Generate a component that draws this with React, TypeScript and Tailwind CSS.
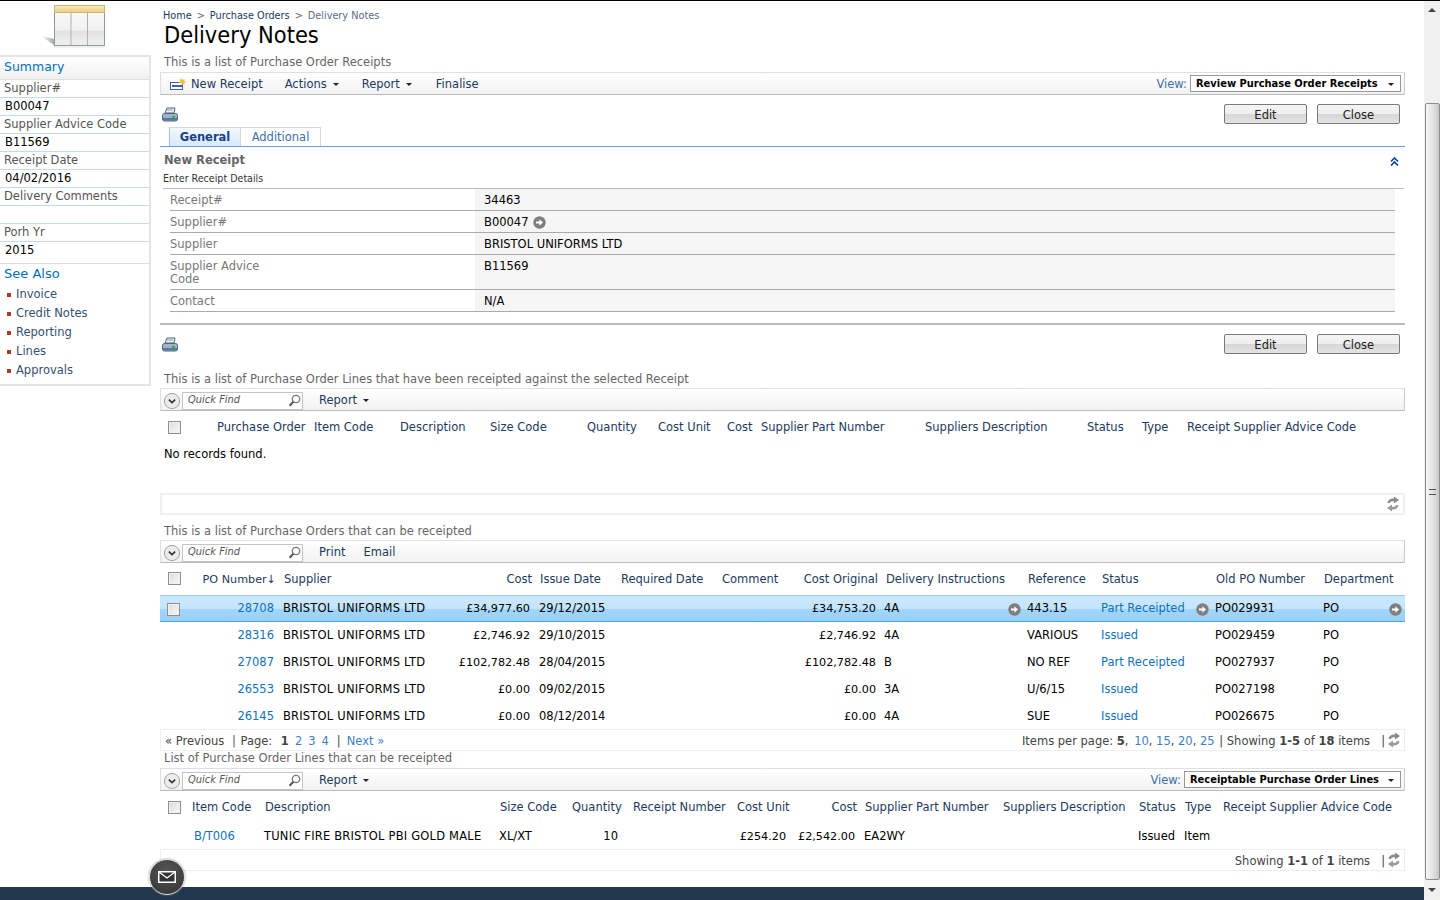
import React from 'react';

const condensed = "font-['DejaVu_Sans_Condensed','DejaVu_Sans',sans-serif] font-stretch-condensed";

const Caret = () => <span className="ml-[6px] inline-block align-middle border-x-[3px] border-t-[3px] border-x-transparent border-t-[#222]" />;

const CircleArrow = () => (
  <svg width="13" height="13" viewBox="0 0 13 13" className="shrink-0">
    <circle cx="6.5" cy="6.5" r="6.2" fill="#7f7f7f" />
    <path d="M3 5.4h3.4V3.2L10 6.5 6.4 9.8V7.6H3z" fill="#fff" />
  </svg>
);

const Printer = () => (
  <svg width="16" height="15" viewBox="0 0 16 15">
    <path d="M5 1h8l-1 5H3z" fill="#eef2f7" stroke="#51657f" />
    <rect x="5" y="2.5" width="6" height="1" fill="#8ba0ba" />
    <rect x="0.5" y="6.5" width="15" height="7.5" rx="2" fill="#9fb2c9" stroke="#4f6582" />
    <rect x="1" y="11" width="14" height="2.5" fill="#5f7899" />
    <rect x="10" y="9" width="3" height="2" fill="#22c02c" />
  </svg>
);

const Refresh = () => (
  <svg width="14" height="16" viewBox="0 0 14 16">
    <path d="M1.5 7C1.8 3.8 4.8 2 8 2.6V0.6l5 3.4-5 3.4V5.3C6 4.9 4.4 5.6 3.8 7z" fill="#8a8a8a" />
    <path d="M12.5 9c-.3 3.2-3.3 5-6.5 4.4v2L1 12l5-3.4v2.1c2 .4 3.6-.3 4.2-1.7z" fill="#9a9a9a" />
  </svg>
);

const Checkbox = () => (
  <span className="block h-[13px] w-[13px] border border-[#8e8f8f] bg-[linear-gradient(135deg,#dcdcdc,#f8f8f8)] shadow-[inset_0_0_0_1px_#f0f0f0]" />
);

const Logo = () => (
  <svg width="80" height="50" viewBox="0 0 80 50">
    <defs>
      <linearGradient id="logoHead" x1="0" y1="0" x2="0" y2="1">
        <stop offset="0" stopColor="#f8ecc0" />
        <stop offset="1" stopColor="#eccc7c" />
      </linearGradient>
      <linearGradient id="logoBody" x1="0" y1="0" x2="0" y2="1">
        <stop offset="0" stopColor="#fafafa" />
        <stop offset="0.6" stopColor="#f2f2f2" />
        <stop offset="0.65" stopColor="#e2e2e2" />
        <stop offset="1" stopColor="#f0f0f0" />
      </linearGradient>
      <linearGradient id="logoShadow" x1="0" y1="0" x2="1" y2="0">
        <stop offset="0" stopColor="#ffffff" />
        <stop offset="1" stopColor="#a8a8a8" />
      </linearGradient>
    </defs>
    <path d="M11 35 L24 38 L24 44z" fill="url(#logoShadow)" />
    <rect x="24.5" y="4.5" width="50" height="40" fill="url(#logoBody)" stroke="#8d9c9a" />
    <rect x="24.5" y="4.5" width="50" height="7" fill="url(#logoHead)" stroke="#c9b67a" />
    <path d="M41 12v32M57.5 12v32" stroke="#a9b4b2" />
    <path d="M24 46h51" stroke="#dde3e2" />
  </svg>
);

const QuickFind = () => (
  <div className="flex items-center">
    <svg width="18" height="18" viewBox="0 0 18 18" className="ml-[2px]">
      <circle cx="9" cy="9" r="7.6" fill="#ececec" stroke="#a5a5a5" />
      <path d="M5.8 7.6 9 10.6l3.2-3" fill="none" stroke="#333" strokeWidth="1.6" />
    </svg>
    <div className="ml-px flex h-[18px] w-[121px] items-center justify-between border border-[#c4c4c4] bg-white pl-[5px] pr-px">
      <span className={`${condensed} italic text-[#555] text-[11px]`}>Quick Find</span>
      <svg width="13" height="13" viewBox="0 0 13 13">
        <circle cx="8" cy="5" r="3.7" fill="#fff" stroke="#777" strokeWidth="1.3" />
        <path d="M5.4 7.8 1.5 11.8" stroke="#555" strokeWidth="2" />
      </svg>
    </div>
  </div>
);

const Toolbar = ({ children, right }: { children: React.ReactNode; right?: React.ReactNode }) => (
  <div className="flex h-[23px] items-center justify-between border border-[#dfdfdf] border-b-[#bbb] border-r-[#ccc] bg-[linear-gradient(#ffffff,#f2f2f2)] pt-[2px] text-[#1c3a5e]">
    <div className="flex items-center">{children}</div>
    {right}
  </div>
);

const ViewSelect = ({ label, width }: { label: string; width: string }) => (
  <div className="mb-[2px] flex items-center">
    <span className="mr-[3px] pt-[3px] text-[#3f6fa5]">View:</span>
    <div className={`${width} mr-[3px] flex h-[17px] items-center justify-between border border-[#999] bg-white pl-[5px] pr-[6px] pt-px ${condensed} font-bold text-black text-[11px]`}>
      <span>{label}</span>
      <Caret />
    </div>
  </div>
);

const ActionRow = () => (
  <div className="flex h-[32px] items-start justify-between">
    <div className="ml-[2px] mt-[12px]"><Printer /></div>
    <div className="mr-[5px] mt-[9px] flex gap-[10px]">
      {['Edit', 'Close'].map((b) => (
        <div key={b} className="flex h-[20px] w-[83px] items-center justify-center rounded-[2px] border border-[#7a7a7a] bg-[linear-gradient(#f5f5f5_0%,#eeeeee_50%,#d6d6d6_52%,#e4e4e4_100%)] pt-[3px] text-[#222]">{b}</div>
      ))}
    </div>
  </div>
);

const formRows = [
  { label: 'Receipt#', value: '34463', h: 'h-[22px]' },
  { label: 'Supplier#', value: 'B00047', arrow: true, h: 'h-[22px]' },
  { label: 'Supplier', value: 'BRISTOL UNIFORMS LTD', h: 'h-[22px]' },
  { label: 'Supplier Advice\nCode', value: 'B11569', h: 'h-[35px]' },
  { label: 'Contact', value: 'N/A', h: 'h-[22px]' },
];

const poRows = [
  ['28708', '£34,977.60', '29/12/2015', '£34,753.20', '4A', '443.15', 'Part Receipted', 'PO029931'],
  ['28316', '£2,746.92', '29/10/2015', '£2,746.92', '4A', 'VARIOUS', 'Issued', 'PO029459'],
  ['27087', '£102,782.48', '28/04/2015', '£102,782.48', 'B', 'NO REF', 'Part Receipted', 'PO027937'],
  ['26553', '£0.00', '09/02/2015', '£0.00', '3A', 'U/6/15', 'Issued', 'PO027198'],
  ['26145', '£0.00', '08/12/2014', '£0.00', '4A', 'SUE', 'Issued', 'PO026675'],
];

const poGrid = 'grid grid-cols-[123px_160px_96px_81px_101px_75px_88px_143px_74px_114px_108px_82px] items-center';
const lineGrid = 'grid grid-cols-[104px_235px_72px_61px_104px_61px_67px_138px_136px_46px_38px_1fr] items-center';

const Sidebar = () => (
  <aside className="w-[151px] shrink-0">
    <div className="h-[54px] pl-[30px]"><Logo /></div>
    <div className="border-r-2 border-b-2 border-t-2 border-[#e4e4e4]">
      <div className="h-[23px] border-b border-[#dedede] bg-[linear-gradient(#ffffff,#f0f0f0)] pl-[4px] pt-[1px] text-[12.5px] leading-[18px] text-[#0072bc]">Summary</div>
      {['Supplier#', 'B00047', 'Supplier Advice Code', 'B11569', 'Receipt Date', '04/02/2016', 'Delivery Comments', '', 'Porh Yr'].map((t, i) => (
        <div key={i} className={`flex h-[18px] items-center border-b border-[#c2dbf5] pt-px ${i % 2 === 0 ? 'pl-[4px] text-[#555]' : 'pl-[5px] text-black'}`}>{t}</div>
      ))}
      <div className="flex h-[22px] items-start border-b border-[#dedede] pl-[5px] text-black">2015</div>
      <div className="pl-[4px] pt-[1px] pb-[4px]">
        <div className="mb-[2px] h-[18px] text-[13px] leading-[18px] text-[#0072bc]">See Also</div>
        {['Invoice', 'Credit Notes', 'Reporting', 'Lines', 'Approvals'].map((t) => (
          <div key={t} className="flex h-[19px] items-center text-[#34506f]">
            <span className="ml-[3px] mr-[5px] h-[4px] w-[4px] bg-[#b23a22]" />
            {t}
          </div>
        ))}
      </div>
    </div>
  </aside>
);

const App = () => {
  return (
    <div className="flex h-[900px] w-[1440px] flex-col overflow-hidden border-t border-black bg-white font-['DejaVu_Sans',sans-serif] text-[11.5px] text-black">
      <div className="relative flex min-h-0 flex-1">
        <div className="relative flex w-[1424px] flex-col">
          <div className="flex flex-1">
            <Sidebar />
            <main className="ml-[9px] w-[1245px]">
              <div className={`${condensed} mt-[8px] flex h-[14px] items-center gap-[5px] pl-[3px] text-[10.8px] text-[#1c3a5e]`}>
                <span>Home</span><span className="text-[#666]">&gt;</span><span>Purchase Orders</span><span className="text-[#666]">&gt;</span><span className="text-[#5a6b85]">Delivery Notes</span>
              </div>
              <h1 className={`${condensed} mt-[-1px] h-[26px] pl-[4px] text-[23.4px] leading-[26px] font-normal`}>Delivery Notes</h1>
              <div className="mt-[6px] flex h-[17px] items-center pl-[4px] text-[#666]">This is a list of Purchase Order Receipts</div>
              <div className="mt-px">
                <Toolbar right={<ViewSelect label="Review Purchase Order Receipts" width="w-[211px]" />}>
                  <svg width="16" height="13" viewBox="0 0 16 13" className="ml-[9px]">
                    <rect x="0.5" y="4.5" width="12" height="7" fill="#fff" stroke="#3d62a8" />
                    <rect x="2" y="7" width="10" height="2" fill="#3d62a8" />
                    <path d="M12 0l1 2 2-1-1 2 2 1-2 1 1 2-2-1-1 1-1-2-2 0 1-2-1-2 2 1z" fill="#f2c230" />
                  </svg>
                  <span className="ml-[5px]">New Receipt</span>
                  <span className="ml-[22px]">Actions<Caret /></span>
                  <span className="ml-[23px]">Report<Caret /></span>
                  <span className="ml-[24px]">Finalise</span>
                </Toolbar>
              </div>
              <ActionRow />
              <div className="flex h-[20px] border-b border-[#6b9bdc] pl-[9px]">
                <div className="flex w-[72px] items-center justify-center border border-b-0 border-[#d8d8d8] border-l-[#9cc4ea] bg-[linear-gradient(#f4f9fe,#d5e9fb)] pt-[2px] font-bold text-[#1c3f8a]">General</div>
                <div className="flex w-[80px] items-center justify-center border border-b-0 border-l-0 border-[#d8d8d8] pt-[2px] text-[#3f6fa5]">Additional</div>
              </div>
              <div className="flex h-[25px] items-center justify-between pl-[4px] pr-[6px] pt-[3px] font-bold text-[#666]">
                <span>New Receipt</span>
                <svg width="9" height="9" viewBox="0 0 9 9"><path d="M1 4.5 4.5 1 8 4.5M1 8.5 4.5 5 8 8.5" fill="none" stroke="#0f3d8f" strokeWidth="1.6" /></svg>
              </div>
              <div className={`${condensed} flex h-[12px] items-center pl-[3px] pt-[2px] text-[10.6px] text-[#333]`}>Enter Receipt Details</div>
              <div className="ml-[3px] mr-px mt-[4px] border-t border-[#bbb] pr-[9px]">
                {formRows.map((r) => (
                  <div key={r.label} className={`${r.h} ml-[7px] grid grid-cols-[305px_1fr] border-b border-[#aaa]`}>
                    <div className="whitespace-pre-line pt-[5px] leading-[13px] text-[#777]">{r.label}</div>
                    <div className="flex items-start gap-[5px] bg-[#f5f5f5] pl-[9px] pt-[5px] leading-[13px]">
                      {r.value}{r.arrow && <CircleArrow />}
                    </div>
                  </div>
                ))}
              </div>
              <div className="mt-[11px] h-[2px] bg-[#bbb]" />
              <ActionRow />
              <div className="mt-[13px] flex h-[18px] items-center pl-[4px] pt-px text-[#666]">This is a list of Purchase Order Lines that have been receipted against the selected Receipt</div>
              <Toolbar>
                <QuickFind />
                <span className="ml-[16px]">Report<Caret /></span>
              </Toolbar>
              <div className="grid h-[32px] grid-cols-[57px_97px_86px_90px_97px_71px_69px_34px_164px_162px_55px_45px_1fr] items-center text-[#1c3a5e]">
                <div className="pl-[8px]"><Checkbox /></div>
                {['Purchase Order', 'Item Code', 'Description', 'Size Code', 'Quantity', 'Cost Unit', 'Cost', 'Supplier Part Number', 'Suppliers Description', 'Status', 'Type', 'Receipt Supplier Advice Code'].map((h) => (
                  <div key={h} className="whitespace-nowrap pt-[2px]">{h}</div>
                ))}
              </div>
              <div className="flex h-[22px] items-center pl-[4px] pt-[2px]">No records found.</div>
              <div className="mt-[28px] flex h-[22px] items-center justify-end border-2 border-[#f0f0f0] pr-[3px]"><Refresh /></div>
              <div className="mt-[6px] flex h-[19px] items-center pl-[4px] pt-[2px] text-[#666]">This is a list of Purchase Orders that can be receipted</div>
              <Toolbar>
                <QuickFind />
                <span className="ml-[16px]">Print</span>
                <span className="ml-[18px]">Email</span>
              </Toolbar>
              <div className={`${poGrid} h-[32px] text-[#1c3a5e] whitespace-nowrap`}>
                <div className="flex items-center justify-between pl-[8px] pr-[7px]"><Checkbox /><span className="pt-[2px] text-[11.2px]">PO Number↓</span></div>
                <div className="pl-px pt-[2px]">Supplier</div>
                <div className="pr-[7px] pt-[2px] text-right">Cost</div>
                <div className="pl-px pt-[2px]">Issue Date</div>
                <div className="pl-px pt-[2px]">Required Date</div>
                <div className="pl-px pt-[2px]">Comment</div>
                <div className="pr-[6px] pt-[2px] text-right">Cost Original</div>
                <div className="pl-[2px] pt-[2px]">Delivery Instructions</div>
                <div className="pl-px pt-[2px]">Reference</div>
                <div className="pl-px pt-[2px]">Status</div>
                <div className="pl-px pt-[2px]">Old PO Number</div>
                <div className="pl-px pt-[2px]">Department</div>
              </div>
              {poRows.map((r, i) => (
                <div key={r[0]} className={`${poGrid} h-[27px] whitespace-nowrap pt-px ${i === 0 ? 'border-y border-t-[#9ccbf0] border-b-[#4f9bd8] bg-[linear-gradient(#cbe8fd_0%,#c4e5fd_50%,#a2d6fb_52%,#97d1fb_100%)]' : ''}`}>
                  <div className="flex items-center justify-between pl-[7px] pr-[9px]">
                    {i === 0 ? <Checkbox /> : <span />}
                    <span className="text-[#0f72bd]">{r[0]}</span>
                  </div>
                  <div className="tracking-[0.2px]">BRISTOL UNIFORMS LTD</div>
                  <div className="pr-[9px] text-right text-[11.2px]">{r[1]}</div>
                  <div>{r[2]}</div>
                  <div />
                  <div />
                  <div className="pr-[8px] text-right text-[11.2px]">{r[3]}</div>
                  <div className="flex items-center justify-between pr-[6px]">{r[4]}{i === 0 && <CircleArrow />}</div>
                  <div>{r[5]}</div>
                  <div className="flex items-center justify-between pr-[6px] text-[#0f72bd]">{r[6]}{i === 0 && <CircleArrow />}</div>
                  <div>{r[7]}</div>
                  <div className="flex items-center justify-between pr-[3px]">PO{i === 0 && <CircleArrow />}</div>
                </div>
              ))}
              <div className="mt-[-1px] flex h-[22px] items-center justify-between border border-[#eeeeee] pl-[4px] pr-[3px] text-[#444]">
                <div className="whitespace-nowrap pt-[3px]">
                  « Previous <span className="ml-[4px] text-[#555]">|</span> <span className="ml-px">Page:</span> <b className="ml-[5px]">1</b>
                  <span className="ml-[6px] text-[#3f7fc0]">2</span><span className="ml-[6px] text-[#3f7fc0]">3</span><span className="ml-[6px] text-[#3f7fc0]">4</span>
                  <span className="ml-[8px]">|</span><span className="ml-[6px] text-[#3f7fc0]">Next »</span>
                </div>
                <div className="flex items-center whitespace-nowrap pt-[3px]">
                  Items per page:&nbsp;<b>5</b>,&nbsp;<span className="ml-[2px] text-[#3f7fc0]">10</span>,&nbsp;<span className="text-[#3f7fc0]">15</span>,&nbsp;<span className="text-[#3f7fc0]">20</span>,&nbsp;<span className="text-[#3f7fc0]">25</span>&nbsp;<span className="ml-px">|</span>&nbsp;Showing&nbsp;<b>1-5</b>&nbsp;of&nbsp;<b>18</b>&nbsp;items
                  <span className="ml-[11px] mr-[2px]">|</span><div className="-mt-[3px]"><Refresh /></div>
                </div>
              </div>
              <div className="flex h-[16px] items-center pl-[4px] text-[#666]">List of Purchase Order Lines that can be receipted</div>
              <div className="mt-px">
                <Toolbar right={<ViewSelect label="Receiptable Purchase Order Lines" width="w-[217px]" />}>
                  <QuickFind />
                  <span className="ml-[16px]">Report<Caret /></span>
                </Toolbar>
              </div>
              <div className={`${lineGrid} h-[32px] text-[#1c3a5e] whitespace-nowrap`}>
                <div className="flex items-center pl-[8px]"><Checkbox /><span className="ml-[11px] pt-[2px]">Item Code</span></div>
                <div className="pl-px pt-[2px]">Description</div>
                <div className="pl-px pt-[2px]">Size Code</div>
                <div className="pl-px pt-[2px]">Quantity</div>
                <div className="pl-px pt-[2px]">Receipt Number</div>
                <div className="pl-px pt-[2px]">Cost Unit</div>
                <div className="pr-[7px] pt-[2px] text-right">Cost</div>
                <div className="pl-px pt-[2px]">Supplier Part Number</div>
                <div className="pl-px pt-[2px]">Suppliers Description</div>
                <div className="pl-px pt-[2px]">Status</div>
                <div className="pl-px pt-[2px]">Type</div>
                <div className="pl-px pt-[2px]">Receipt Supplier Advice Code</div>
              </div>
              <div className={`${lineGrid} h-[26px] pt-[2px] whitespace-nowrap`}>
                <div className="pl-[34px] text-[#0f72bd]">B/T006</div>
                <div className="tracking-[0.2px]">TUNIC FIRE BRISTOL PBI GOLD MALE</div>
                <div>XL/XT</div>
                <div className="pr-[14px] text-right">10</div>
                <div />
                <div className="pr-[11px] text-right text-[11.2px]">£254.20</div>
                <div className="pr-[9px] text-right text-[11.2px]">£2,542.00</div>
                <div>EA2WY</div>
                <div />
                <div>Issued</div>
                <div>Item</div>
                <div />
              </div>
              <div className="flex h-[22px] items-center justify-end border border-[#eeeeee] pr-[3px] pt-[3px] text-[#444] whitespace-nowrap">
                Showing&nbsp;<b>1-1</b>&nbsp;of&nbsp;<b>1</b>&nbsp;items
                <span className="ml-[11px] mr-[2px]">|</span><div className="-mt-[3px]"><Refresh /></div>
              </div>
            </main>
          </div>
          <div className="h-[13px] bg-[#21374d]" />
          <div className="absolute left-[149px] top-[858px] flex h-[36px] w-[36px] items-center justify-center rounded-full border border-[#ddd] bg-[radial-gradient(circle_at_50%_30%,#555,#333)] shadow-[0_0_2px_#888]">
            <svg width="18" height="12" viewBox="0 0 18 12">
              <rect x="0.75" y="0.75" width="16.5" height="10.5" fill="#333" stroke="#fff" strokeWidth="1.5" />
              <path d="M1 1l8 6 8-6" fill="none" stroke="#fff" strokeWidth="1.3" />
            </svg>
          </div>
        </div>
        <div className="flex w-[16px] flex-col items-center bg-[#f0f0f0]">
          <div className="flex h-[17px] items-center"><span className="border-x-[4px] border-b-[4px] border-x-transparent border-b-[#444]" /></div>
          <div className="mt-[85px] flex h-[777px] w-[15px] items-center justify-center rounded-[2px] border border-[#8c8c8c] bg-[linear-gradient(90deg,#f6f6f6,#e4e4e4_50%,#c8c8c8)]">
            <span className="h-[6px] w-[7px] border-y border-[#555] bg-[linear-gradient(#0000_40%,#555_40%,#555_60%,#0000_60%)]" />
          </div>
          <div className="flex h-[19px] items-center"><span className="border-x-[4px] border-t-[4px] border-x-transparent border-t-[#444]" /></div>
        </div>
      </div>
    </div>
  );
};

export default App;
